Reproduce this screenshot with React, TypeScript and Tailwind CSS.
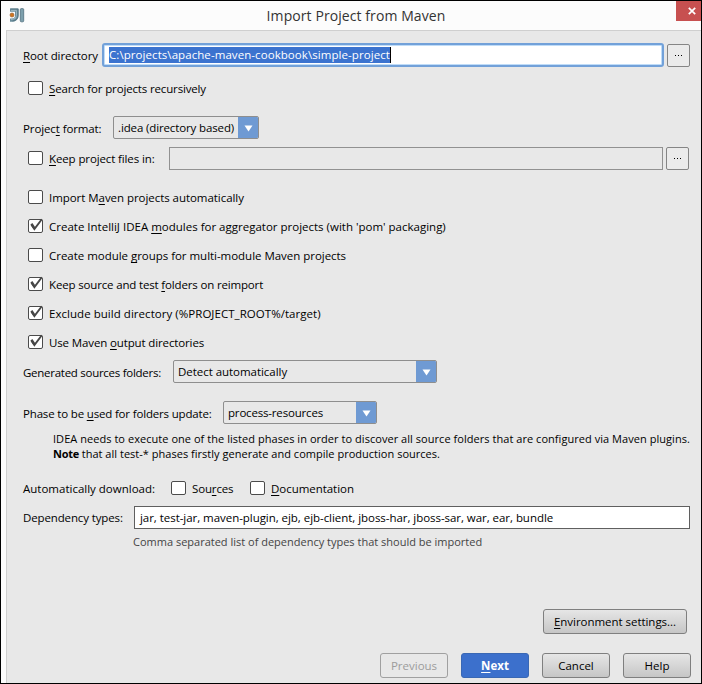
import { Fragment, type ReactNode } from 'react'
import clsx from 'clsx'

// '&' marks the mnemonic letter, as in Swing resource bundles
function Mnemonic({ text }: { text: string }) {
  const i = text.indexOf('&')
  if (i < 0) return <Fragment>{text}</Fragment>
  return (
    <Fragment>
      {text.slice(0, i)}
      <span className="underline underline-offset-[1.5px] decoration-1 [text-decoration-skip-ink:none]">{text[i + 1]}</span>
      {text.slice(i + 2)}
    </Fragment>
  )
}

function Check({ label, checked, className }: { label: string; checked?: boolean; className?: string }) {
  return (
    <label className={clsx('flex items-center h-3.5 whitespace-nowrap', className)}>
      <span className="relative w-[15px] h-3.5 rounded-[2px] border border-[#4b4b4b] bg-white shrink-0">
        {checked && (
          <svg className="absolute -left-px -top-[3px]" width="16" height="16" viewBox="0 0 16 16" fill="none">
            <path d="M3.4 7.4 6.4 12 13.8 2.2" stroke="#474747" strokeWidth="1.9" />
            <path d="M3.4 6.8 6.4 11.2" stroke="#474747" strokeWidth="2.4" />
          </svg>
        )}
      </span>
      <span className="ml-1.5 pt-px"><Mnemonic text={label} /></span>
    </label>
  )
}

function Combo({ value, className }: { value: string; className?: string }) {
  return (
    <div className={clsx('flex h-[23px] rounded-[2px] border border-[#8e8e8e] bg-[#e8e8e8] overflow-hidden', className)}>
      <span className="flex-1 pl-1 leading-[22px] whitespace-nowrap">{value}</span>
      <span className="w-5 pt-px bg-[#6f9ad3] flex items-center justify-center">
        <svg width="9" height="7" viewBox="0 0 9 7"><path d="M0.5 0.5h8L4.5 6.5z" fill="#fff" /></svg>
      </span>
    </div>
  )
}

function BrowseButton() {
  return (
    <button className="w-[23px] h-[23px] rounded-[2px] border border-[#858585] bg-[#ebebeb] flex items-center justify-center gap-0.5">
      <i className="size-px bg-black" />
      <i className="size-px bg-black" />
      <i className="size-px bg-black" />
    </button>
  )
}

function Button({ children, className }: { children: ReactNode; className?: string }) {
  return (
    <button className={clsx('h-[25px] rounded-[3px] border whitespace-nowrap', className)}>
      {children}
    </button>
  )
}

const RAISED = 'border-[#7f7f7f] bg-linear-to-b from-[#e6e6e6] to-[#c6c6c6]'

function TitleBar() {
  return (
    <header className="flex h-[29px] bg-[#fcfcfc]">
      <svg className="ml-2 mt-[7px] shrink-0" width="16" height="15" viewBox="0 0 16 15">
        <path d="M1 0.5h8.6v7.2a6 6 0 0 1-6 6H1v-3.2h2a3 3 0 0 0 3-3V3.8H1z" fill="#6a8d9c" />
        <path d="M1.4 1h7.6v6.6a5.4 5.4 0 0 1-5.4 5.4" fill="none" stroke="#4f6f7d" strokeWidth="0.9" />
        <path d="M2 2.4h5.4v5a4 4 0 0 1-4 4H2" fill="none" stroke="#a9c2cb" strokeWidth="0.8" />
        <rect x="11.3" y="0.6" width="3.4" height="13.2" rx="1" fill="#7d9fac" stroke="#4f6f7d" strokeWidth="0.8" />
        <circle cx="3" cy="7" r="2" fill="#d0741e" stroke="#8f5a2a" strokeWidth="0.6" />
      </svg>
      <h1 className="flex-1 pl-[11px] text-center text-[14px] leading-[29px] tracking-[0.08px] text-[#333]">Import Project from Maven</h1>
      <button className="w-[25px] h-5 bg-[#c75050] flex items-center pl-3">
        <svg width="8" height="8" viewBox="0 0 8 8"><path d="M0.8 0.8l6.4 6.4M7.2 0.8L0.8 7.2" stroke="#fff" strokeWidth="1.7" /></svg>
      </button>
    </header>
  )
}

export default function App() {
  return (
    <div className="w-[702px] h-[684px] overflow-hidden border border-black bg-[#fcfcfc] font-['Open_Sans','Noto_Sans',sans-serif] text-[11.5px] leading-[15px] text-black">
      <TitleBar />
      <main className="ml-[5px] h-[653px] pl-4 border-l border-t border-[#cfcfcf] bg-[#e8e8e8]">
        <div className="flex h-6 mt-3 items-start">
          <label className="w-[79px] pt-[5px] tracking-[-0.08px]"><Mnemonic text="&Root directory" /></label>
          <div className="w-[562px] h-6 rounded-[3px] border-2 border-[#72a1d9] bg-[#bfdcf8] p-px">
            <div className="h-full flex bg-white pl-1 pt-px">
              <span className="h-4 bg-[#3b73cf] leading-4 text-white whitespace-nowrap border-r border-black tracking-[0.07px]">
                C:\projects\apache-maven-cookbook\simple-project
              </span>
            </div>
          </div>
          <div className="ml-[3px] mt-px"><BrowseButton /></div>
        </div>

        <Check label="&Search for projects recursively" className="mt-3.5 ml-[5px] tracking-[-0.15px]" />

        <div className="flex h-[23px] mt-[21px] items-center">
          <label className="w-[90px] pt-0.5 tracking-[-0.11px]"><Mnemonic text="Projec&t format:" /></label>
          <Combo value=".idea (directory based)" className="w-[146px] tracking-[-0.13px]" />
        </div>

        <div className="flex h-[23px] mt-2 items-center">
          <Check label="&Keep project files in:" className="mb-px ml-[5px] w-[141px] tracking-[-0.12px]" />
          <div className="w-[494px] h-[23px] border border-[#919191]" />
          <div className="ml-[3px]"><BrowseButton /></div>
        </div>

        <div className="flex flex-col gap-[15px] mt-5 ml-[5px]">
          <Check label="Import M&aven projects automatically" className="tracking-[-0.05px]" />
          <Check checked label="Create IntelliJ IDEA &modules for aggregator projects (with 'pom' packaging)" />
          <Check label="Create module &groups for multi-module Maven projects" className="tracking-[-0.03px]" />
          <Check checked label="Keep source and test &folders on reimport" className="tracking-[-0.16px]" />
          <Check checked label="Exclude build directory (%PROJECT_ROOT%/target)" className="tracking-[0.04px]" />
          <Check checked label="Use Maven &output directories" className="tracking-[-0.13px]" />
        </div>

        <div className="flex h-[23px] mt-[11px] items-center">
          <label className="w-[150px] pt-px tracking-[-0.27px]">Generated sources folders:</label>
          <Combo value="Detect automatically" className="w-[264px] tracking-[-0.04px]" />
        </div>

        <div className="flex h-[23px] mt-[18px] items-center">
          <label className="w-[200px] pt-px tracking-[-0.17px]"><Mnemonic text="Phase to be &used for folders update:" /></label>
          <Combo value="process-resources" className="w-[154px] tracking-[-0.18px]" />
        </div>

        <div className="h-[30px] mt-[7px] ml-[30px] text-[11px] whitespace-nowrap">
          <p className="tracking-[0.045px]">IDEA needs to execute one of the listed phases in order to discover all source folders that are configured via Maven plugins.</p>
          <p className="tracking-[0.02px]"><b className="tracking-[-0.3px]">Note</b> that all test-* phases firstly generate and compile production sources.</p>
        </div>

        <div className="flex h-3.5 mt-5 items-center">
          <label className="w-[148px] pt-px">Automatically download:</label>
          <Check label="Sou&rces" className="w-[79px] tracking-[-0.15px]" />
          <Check label="&Documentation" className="tracking-[-0.04px]" />
        </div>

        <div className="flex h-[23px] mt-[11px] items-center">
          <label className="w-[111px] pb-px tracking-[-0.13px]">Dependency types:</label>
          <div className="w-[556px] h-[23px] border border-[#5f5f5f] bg-white pl-[5px] leading-[22px] whitespace-nowrap tracking-[-0.045px]">
            jar, test-jar, maven-plugin, ejb, ejb-client, jboss-har, jboss-sar, war, ear, bundle
          </div>
        </div>
        <p className="mt-[5px] ml-[110px] text-[11px] text-[#444]">Comma separated list of dependency types that should be imported</p>

        <div className="flex justify-end mt-[60px] pr-3.5">
          <Button className={clsx(RAISED, 'w-36 tracking-[-0.04px]')}><Mnemonic text="&Environment settings..." /></Button>
        </div>

        <div className="flex justify-end gap-[13px] mt-[19px] pr-2.5">
          <Button className="w-[68px] border-[#a0a0a0] text-[#9c9c9c]">Previous</Button>
          <Button className="w-[68px] border-[#3a68b4] bg-[#3c70cc] font-bold text-white"><Mnemonic text="&Next" /></Button>
          <Button className={clsx(RAISED, 'w-[68px]')}>Cancel</Button>
          <Button className={clsx(RAISED, 'w-[68px]')}>Help</Button>
        </div>
      </main>
    </div>
  )
}
